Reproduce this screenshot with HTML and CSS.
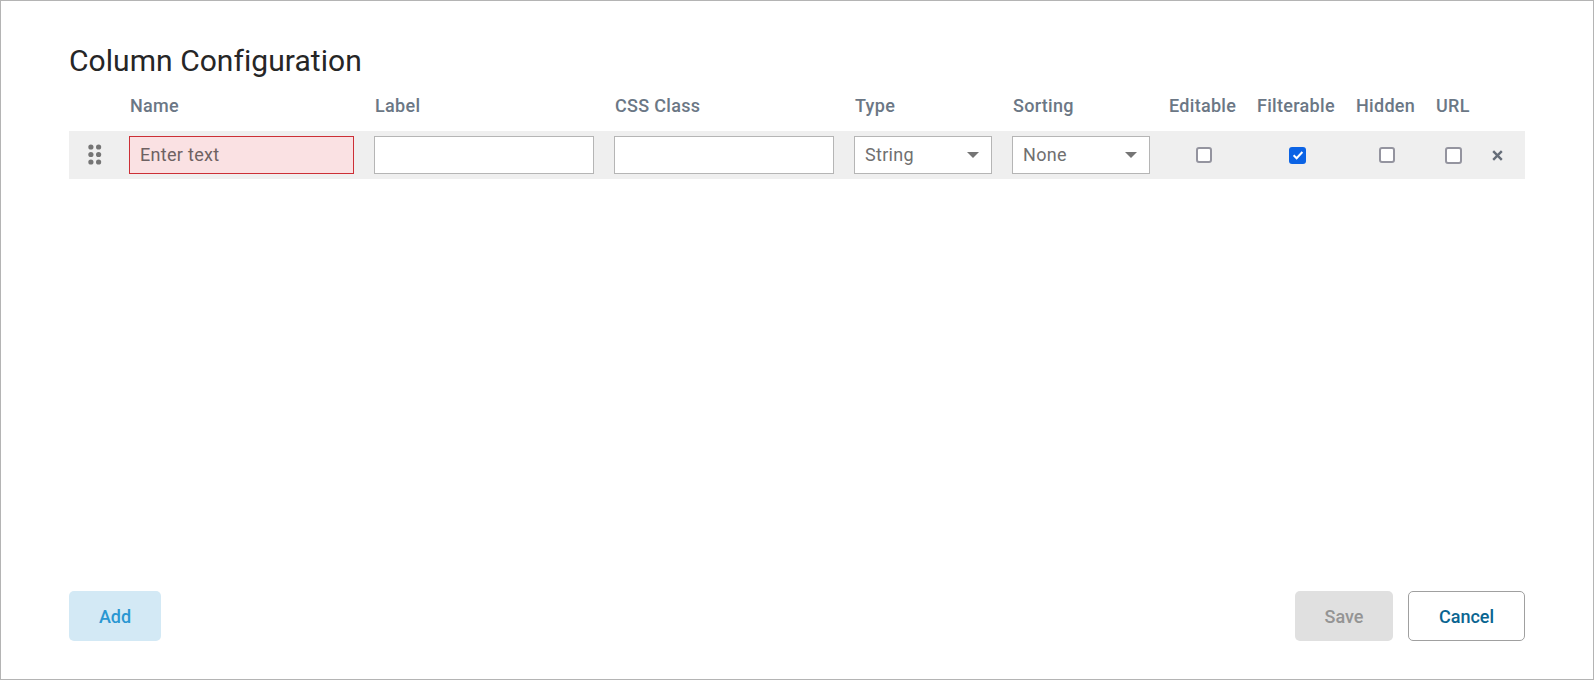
FILE: index.html
```html
<!DOCTYPE html>
<html lang="en">
<head>
    <meta charset="UTF-8">
    <meta name="viewport" content="width=device-width, initial-scale=1.0">
    <title>Column Configuration</title>
    <link rel="stylesheet" href="styles.css">
</head>
<body>
    <div class="dialog">
        <h1 class="dialog-title">Column Configuration</h1>

        <div class="columns columns-head">
            <span></span>
            <span class="head-text">Name</span>
            <span class="head-text">Label</span>
            <span class="head-text">CSS Class</span>
            <span class="head-text">Type</span>
            <span class="head-text">Sorting</span>
            <span class="head-check">Editable</span>
            <span class="head-check">Filterable</span>
            <span class="head-check">Hidden</span>
            <span class="head-check">URL</span>
            <span></span>
        </div>

        <div class="columns columns-row">
            <svg class="drag" width="14" height="22" viewBox="0 0 14 22" aria-hidden="true">
                <g fill="#757575">
                    <circle cx="2.9" cy="3" r="2.6"/><circle cx="10.6" cy="3" r="2.6"/>
                    <circle cx="2.9" cy="10.5" r="2.6"/><circle cx="10.6" cy="10.5" r="2.6"/>
                    <circle cx="2.9" cy="18" r="2.6"/><circle cx="10.6" cy="18" r="2.6"/>
                </g>
            </svg>
            <input class="field field-error" type="text" placeholder="Enter text">
            <input class="field" type="text">
            <input class="field" type="text">
            <div class="select"><span>String</span><i class="caret"></i></div>
            <div class="select"><span>None</span><i class="caret"></i></div>
            <div class="cell"><span class="check"></span></div>
            <div class="cell">
                <span class="check check-on">
                    <svg width="12" height="12" viewBox="0 0 12 12" aria-hidden="true"><path d="M1.6 6.3 4.6 9.2 10.4 3" fill="none" stroke="#fff" stroke-width="2"/></svg>
                </span>
            </div>
            <div class="cell"><span class="check"></span></div>
            <div class="cell"><span class="check check-url"></span></div>
            <svg class="remove" width="11" height="11" viewBox="0 0 11 11" aria-hidden="true"><path d="M1.2 1.2 9.8 9.8M9.8 1.2 1.2 9.8" stroke="#656d78" stroke-width="2.4" fill="none"/></svg>
        </div>

        <div class="dialog-footer">
            <button class="btn btn-add" type="button">Add</button>
            <div class="footer-right">
                <button class="btn btn-save" type="button" disabled>Save</button>
                <button class="btn btn-cancel" type="button">Cancel</button>
            </div>
        </div>
    </div>
</body>
</html>
```

FILE: styles.css
```css
html, body {
    margin: 0;
    padding: 0;
}

body {
    font-family: Roboto, "Liberation Sans", sans-serif;
    background-color: white;
}

.dialog {
    box-sizing: border-box;
    width: 1594px;
    height: 680px;
    border: 1px solid #b4b4b4;
    padding: 0 68px 38px 68px;
    display: flex;
    flex-direction: column;
}

.dialog-title {
    margin: 42px 0 0 0;
    font-size: 30px;
    line-height: 36px;
    font-weight: 400;
    letter-spacing: 0.05px;
    color: #262626;
}

.columns {
    display: grid;
    grid-template-columns: 28px 225px 220px 220px 138px 138px 68px 79px 60px 33px 15px;
    column-gap: 20px;
    padding: 0 21px 0 12px;
    align-items: center;
}

.columns-head {
    margin-top: 11px;
    height: 30px;
    font-size: 18px;
    font-weight: 500;
    letter-spacing: 0.3px;
    color: #6b7785;
    white-space: nowrap;
}

.head-text {
    padding-left: 1px;
}

.head-check {
    margin-left: -1px;
}

.columns-row {
    margin-top: 11px;
    height: 48px;
    background-color: #efefef;
}

.drag {
    justify-self: center;
}

.field {
    box-sizing: border-box;
    width: 100%;
    height: 38px;
    padding: 0 10px 2px 10px;
    border: 1px solid #b5b5b5;
    border-radius: 0;
    background-color: white;
    font-family: inherit;
    font-size: 18px;
    letter-spacing: 0.3px;
    color: #707070;
    outline: none;
}

.field-error {
    background-color: #fae1e3;
    border-color: #cc2f36;
}

.field-error::placeholder {
    color: #6e6162;
    opacity: 1;
}

.select {
    box-sizing: border-box;
    height: 38px;
    padding: 0 12px 0 10px;
    border: 1px solid #b5b5b5;
    background-color: white;
    display: flex;
    align-items: center;
    justify-content: space-between;
    font-size: 18px;
    letter-spacing: 0.3px;
    color: #707070;
}

.select span {
    margin-bottom: 2px;
}

.caret {
    width: 0;
    height: 0;
    border-left: 6px solid transparent;
    border-right: 6px solid transparent;
    border-top: 6px solid #757575;
}

.cell {
    display: flex;
    justify-content: center;
}

.check {
    box-sizing: border-box;
    width: 16px;
    height: 16px;
    border: 2px solid #94949f;
    border-radius: 3px;
    background-color: white;
    display: flex;
    align-items: center;
    justify-content: center;
}

.check-on {
    width: 17px;
    height: 17px;
    border: none;
    background-color: #0b63e5;
}

.check-url {
    width: 17px;
    height: 17px;
}

.remove {
    justify-self: center;
}

.dialog-footer {
    margin-top: auto;
    display: flex;
    justify-content: space-between;
}

.footer-right {
    display: flex;
    gap: 15px;
}

.btn {
    box-sizing: border-box;
    height: 50px;
    border: none;
    border-radius: 5px;
    font-family: inherit;
    font-size: 18px;
    font-weight: 500;
}

.btn-add {
    width: 92px;
    background-color: #d3e9f5;
    color: #2a97d2;
}

.btn-save {
    width: 98px;
    background-color: #e0e0e0;
    color: #949494;
}

.btn-cancel {
    width: 117px;
    background-color: white;
    border: 1px solid #a0a0a0;
    color: #0a6591;
}
```
